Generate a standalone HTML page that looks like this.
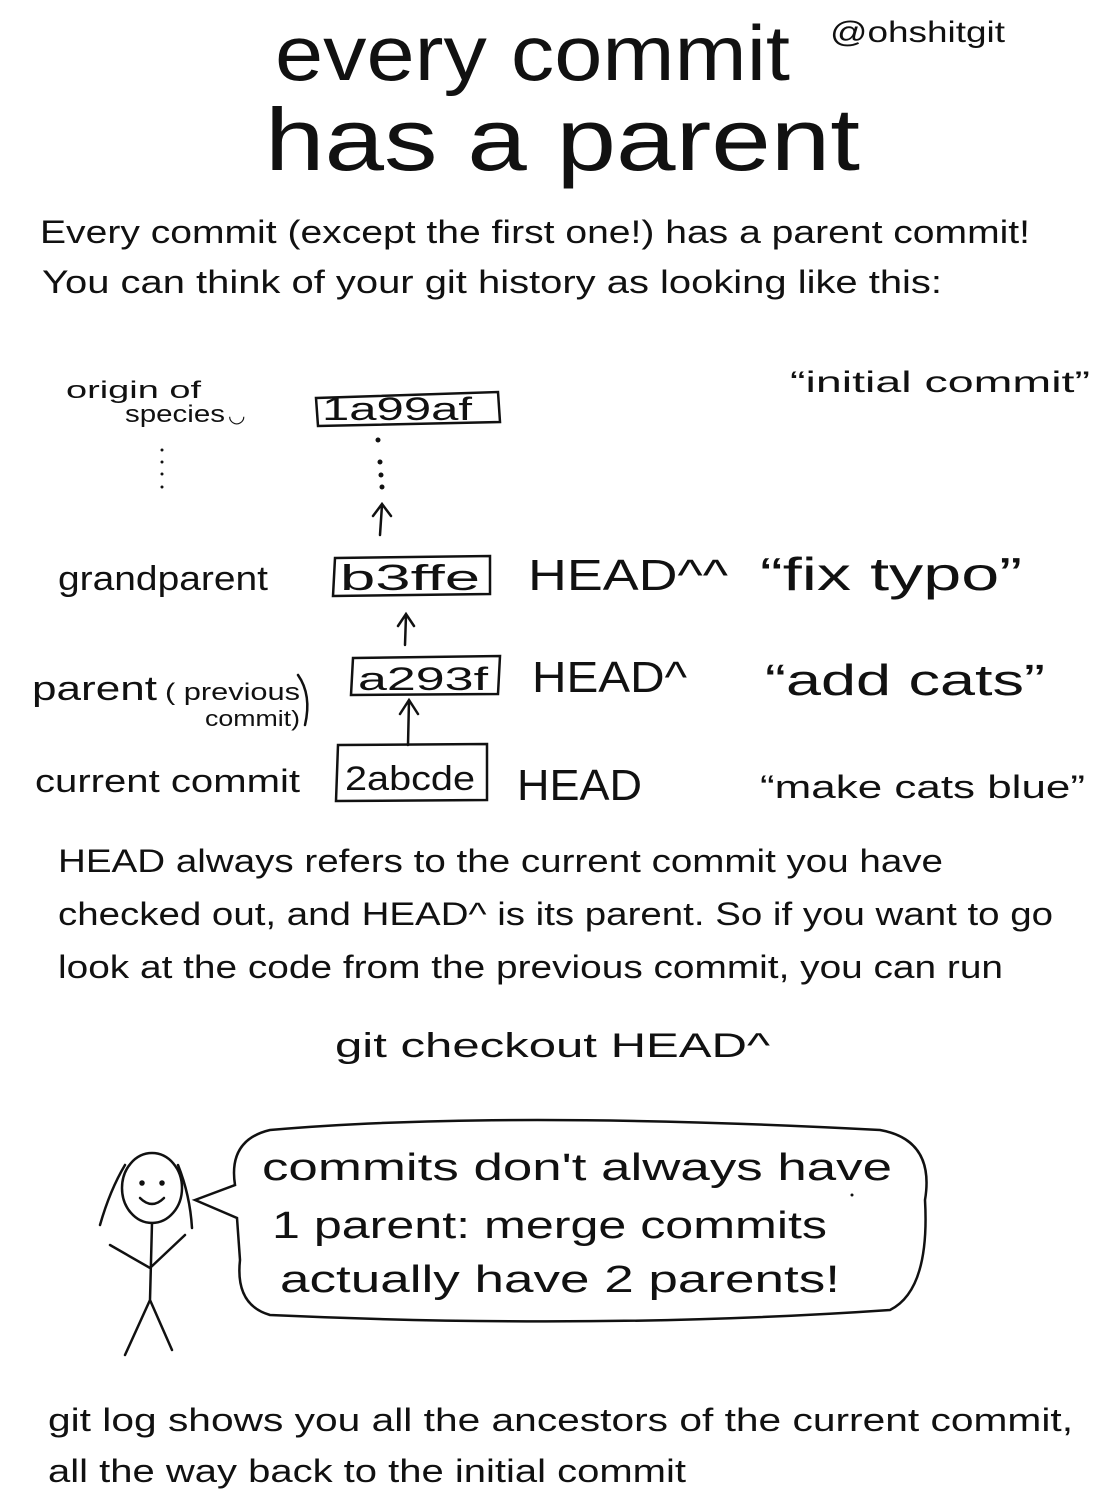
<!DOCTYPE html>
<html><head><meta charset="utf-8"><style>
html,body{margin:0;padding:0;background:#fff;}
svg{display:block;}
text{font-family:"Liberation Sans",sans-serif;fill:#111;}
</style></head><body>
<svg width="1102" height="1506" viewBox="0 0 1102 1506" xmlns="http://www.w3.org/2000/svg">
<rect width="1102" height="1506" fill="#fff"/>
<text x="275" y="80" font-size="78" textLength="515" lengthAdjust="spacingAndGlyphs">every commit</text>
<text x="830" y="42" font-size="30" textLength="175" lengthAdjust="spacingAndGlyphs">@ohshitgit</text>
<text x="265" y="170" font-size="88" textLength="595" lengthAdjust="spacingAndGlyphs">has a parent</text>
<text x="40" y="243" font-size="32" textLength="990" lengthAdjust="spacingAndGlyphs">Every commit (except the first one!) has a parent commit!</text>
<text x="42" y="293" font-size="32" textLength="900" lengthAdjust="spacingAndGlyphs">You can think of your git history as looking like this:</text>

<text x="66" y="398" font-size="24" textLength="135" lengthAdjust="spacingAndGlyphs">origin of</text>
<text x="125" y="422" font-size="24" textLength="100" lengthAdjust="spacingAndGlyphs">species</text>
<text x="228" y="422" font-size="20">◡</text>
<g fill="#111">
<circle cx="162" cy="450" r="1.5"/><circle cx="162" cy="462" r="1.5"/><circle cx="162" cy="474" r="1.5"/><circle cx="162" cy="487" r="1.5"/>
</g>
<text x="790" y="392" font-size="30" textLength="300" lengthAdjust="spacingAndGlyphs">“initial commit”</text>

<g stroke="#111" fill="none" stroke-width="2.5" stroke-linecap="round">
<path d="M316 398 L498 392 L500 422 L318 426 Z"/>
<path d="M335 558 L490 556 L490 594 L333 596 Z"/>
<path d="M353 658 L500 656 L498 694 L351 695 Z"/>
<path d="M338 745 L487 744 L487 800 L336 801 Z"/>
<path d="M380 535 L382 505 M373 516 L382 504 L391 516"/>
<path d="M405 645 L406 615 M398 626 L406 614 L414 626"/>
<path d="M408 745 L409 700 M400 714 L409 700 L418 714"/>
<path d="M298 675 Q312 695 305 725"/>
</g>
<g fill="#111">
<circle cx="378" cy="440" r="2.5"/><circle cx="380" cy="462" r="2.5"/><circle cx="381" cy="475" r="2.5"/><circle cx="382" cy="487" r="2.5"/>
</g>
<text x="322" y="420" font-size="32" textLength="150" lengthAdjust="spacingAndGlyphs">1a99af</text>
<text x="340" y="590" font-size="36" textLength="140" lengthAdjust="spacingAndGlyphs">b3ffe</text>
<text x="358" y="690" font-size="32" textLength="130" lengthAdjust="spacingAndGlyphs">a293f</text>
<text x="345" y="790" font-size="34" textLength="130" lengthAdjust="spacingAndGlyphs">2abcde</text>

<text x="58" y="590" font-size="34" textLength="210" lengthAdjust="spacingAndGlyphs">grandparent</text>
<text x="32" y="700" font-size="34" textLength="125" lengthAdjust="spacingAndGlyphs">parent</text>
<text x="165" y="700" font-size="24" textLength="135" lengthAdjust="spacingAndGlyphs">( previous</text>
<text x="205" y="726" font-size="22" textLength="95" lengthAdjust="spacingAndGlyphs">commit)</text>
<text x="35" y="792" font-size="32" textLength="265" lengthAdjust="spacingAndGlyphs">current commit</text>

<text x="528" y="590" font-size="44" textLength="200" lengthAdjust="spacingAndGlyphs">HEAD^^</text>
<text x="532" y="692" font-size="44" textLength="155" lengthAdjust="spacingAndGlyphs">HEAD^</text>
<text x="517" y="800" font-size="44" textLength="125" lengthAdjust="spacingAndGlyphs">HEAD</text>

<text x="760" y="590" font-size="46" textLength="262" lengthAdjust="spacingAndGlyphs">“fix typo”</text>
<text x="765" y="695" font-size="44" textLength="280" lengthAdjust="spacingAndGlyphs">“add cats”</text>
<text x="760" y="798" font-size="32" textLength="325" lengthAdjust="spacingAndGlyphs">“make cats blue”</text>

<text x="58" y="872" font-size="32" textLength="885" lengthAdjust="spacingAndGlyphs">HEAD always refers to the current commit you have</text>
<text x="58" y="925" font-size="32" textLength="995" lengthAdjust="spacingAndGlyphs">checked out, and HEAD^ is its parent. So if you want to go</text>
<text x="58" y="978" font-size="32" textLength="945" lengthAdjust="spacingAndGlyphs">look at the code from the previous commit, you can run</text>

<text x="335" y="1057" font-size="34" textLength="435" lengthAdjust="spacingAndGlyphs">git checkout HEAD^</text>

<g stroke="#111" fill="none" stroke-width="2.5" stroke-linecap="round">
<ellipse cx="152" cy="1188" rx="30" ry="35"/>
<path d="M125 1165 Q110 1190 100 1225 M178 1165 Q190 1195 192 1228"/>
<circle cx="142" cy="1183" r="1.5" fill="#111"/><circle cx="162" cy="1183" r="1.5" fill="#111"/>
<path d="M140 1198 Q152 1210 164 1198"/>
<path d="M152 1223 L150 1300 M110 1245 L150 1268 L185 1235 M150 1300 L125 1355 M150 1300 L172 1350"/>
<path d="M195 1200 L235 1185 Q228 1140 270 1130 Q500 1110 880 1130 Q935 1140 925 1200 Q930 1290 890 1310 Q600 1330 270 1315 Q235 1305 240 1260 L237 1218 Z"/>
</g>
<circle cx="852" cy="1195" r="1.5" fill="#111"/>
<text x="262" y="1180" font-size="38" textLength="630" lengthAdjust="spacingAndGlyphs">commits don't always have</text>
<text x="272" y="1238" font-size="38" textLength="555" lengthAdjust="spacingAndGlyphs">1 parent: merge commits</text>
<text x="280" y="1292" font-size="38" textLength="560" lengthAdjust="spacingAndGlyphs">actually have 2 parents!</text>

<text x="48" y="1431" font-size="32" textLength="1025" lengthAdjust="spacingAndGlyphs">git log shows you all the ancestors of the current commit,</text>
<text x="48" y="1482" font-size="32" textLength="638" lengthAdjust="spacingAndGlyphs">all the way back to the initial commit</text>
</svg>
</body></html>
